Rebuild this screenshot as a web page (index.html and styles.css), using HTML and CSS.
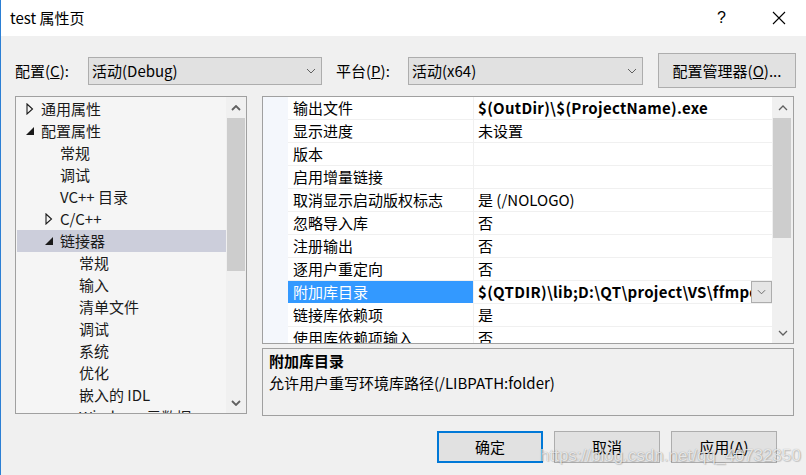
FILE: index.html
```html
<!DOCTYPE html>
<html lang="zh-CN">
<head>
  <meta charset="UTF-8" />
  <title>test 属性页</title>
  <link rel="stylesheet" href="styles.css">
</head>
<body>
<div class="screen">
  <div class="desk"></div>
  <div class="dialog">
    <div class="titlebar">
      <span class="title">test 属性页</span>
      <span class="help">?</span>
      <svg class="close" viewBox="0 0 14 14"><path d="M1 1 L13 13 M13 1 L1 13"/></svg>
    </div>

    <div class="content">
      <!-- config / platform -->
      <div class="config-row">
        <span class="label cfg-label">配置(<u>C</u>):</span>
        <div class="combo cfg-combo">
          <span>活动(Debug)</span>
          <svg class="chev" viewBox="0 0 10 6"><polyline points="1,1 5,5 9,1"/></svg>
        </div>
        <span class="label plat-label">平台(<u>P</u>):</span>
        <div class="combo plat-combo">
          <span>活动(x64)</span>
          <svg class="chev" viewBox="0 0 10 6"><polyline points="1,1 5,5 9,1"/></svg>
        </div>
        <div class="btn manager-btn">配置管理器(<u>O</u>)...</div>
      </div>

      <div class="main">
        <!-- tree -->
        <div class="tree">
          <div class="tree-items">
            <div class="node lv0"><span class="twisty"><svg viewBox="0 0 8 12"><polygon class="closed" points="1,1 6.5,6 1,11"/></svg></span>通用属性</div>
            <div class="node lv0"><span class="twisty"><svg viewBox="0 0 8 12"><polygon class="open" points="8,2 8,10 0,10"/></svg></span>配置属性</div>
            <div class="node lv1"><span class="twisty"></span>常规</div>
            <div class="node lv1"><span class="twisty"></span>调试</div>
            <div class="node lv1"><span class="twisty"></span>VC++ 目录</div>
            <div class="node lv1"><span class="twisty"><svg viewBox="0 0 8 12"><polygon class="closed" points="1,1 6.5,6 1,11"/></svg></span>C/C++</div>
            <div class="node lv1 selected"><span class="twisty"><svg viewBox="0 0 8 12"><polygon class="open" points="8,2 8,10 0,10"/></svg></span>链接器</div>
            <div class="node lv2"><span class="twisty"></span>常规</div>
            <div class="node lv2"><span class="twisty"></span>输入</div>
            <div class="node lv2"><span class="twisty"></span>清单文件</div>
            <div class="node lv2"><span class="twisty"></span>调试</div>
            <div class="node lv2"><span class="twisty"></span>系统</div>
            <div class="node lv2"><span class="twisty"></span>优化</div>
            <div class="node lv2"><span class="twisty"></span>嵌入的 IDL</div>
            <div class="node lv2"><span class="twisty"></span>Windows 元数据</div>
          </div>
          <div class="scrollbar tree-scroll">
            <div class="arrow"><svg viewBox="0 0 10 6"><polyline points="1,5 5,1 9,5"/></svg></div>
            <div class="thumb"></div>
            <div class="track"></div>
            <div class="arrow"><svg viewBox="0 0 10 6"><polyline points="1,1 5,5 9,1"/></svg></div>
          </div>
        </div>

        <div class="right">
          <!-- property grid -->
          <div class="grid">
            <div class="rows">
              <div class="row"><span class="gutter"></span><span class="name">输出文件</span><span class="value bold">$(OutDir)\$(ProjectName).exe</span></div>
              <div class="row"><span class="gutter"></span><span class="name">显示进度</span><span class="value">未设置</span></div>
              <div class="row"><span class="gutter"></span><span class="name">版本</span><span class="value"></span></div>
              <div class="row"><span class="gutter"></span><span class="name">启用增量链接</span><span class="value"></span></div>
              <div class="row"><span class="gutter"></span><span class="name">取消显示启动版权标志</span><span class="value">是 (/NOLOGO)</span></div>
              <div class="row"><span class="gutter"></span><span class="name">忽略导入库</span><span class="value">否</span></div>
              <div class="row"><span class="gutter"></span><span class="name">注册输出</span><span class="value">否</span></div>
              <div class="row"><span class="gutter"></span><span class="name">逐用户重定向</span><span class="value">否</span></div>
              <div class="row active"><span class="gutter"></span><span class="name">附加库目录</span><span class="value bold"><span class="clip">$(QTDIR)\lib;D:\QT\project\VS\ffmpeg\lib</span><span class="drop"><svg viewBox="0 0 10 6"><polyline points="1,1 5,5 9,1"/></svg></span></span></div>
              <div class="row"><span class="gutter"></span><span class="name">链接库依赖项</span><span class="value">是</span></div>
              <div class="row"><span class="gutter"></span><span class="name">使用库依赖项输入</span><span class="value">否</span></div>
            </div>
            <div class="scrollbar grid-scroll">
              <div class="arrow"><svg viewBox="0 0 10 6"><polyline points="1,5 5,1 9,5"/></svg></div>
              <div class="thumb"></div>
              <div class="track"></div>
              <div class="arrow"><svg viewBox="0 0 10 6"><polyline points="1,1 5,5 9,1"/></svg></div>
            </div>
          </div>

          <div class="desc">
            <div class="desc-title">附加库目录</div>
            <div>允许用户重写环境库路径(/LIBPATH:folder)</div>
          </div>
        </div>
      </div>

      <div class="actions">
        <div class="btn primary">确定</div>
        <div class="btn">取消</div>
        <div class="btn">应用(<u>A</u>)</div>
      </div>
    </div>

    <div class="watermark">https://blog.csdn.net/qq_40732350</div>
  </div>
</div>
</body>
</html>
```

FILE: styles.css
```css
body {
  margin: 0;
  padding: 0;
  font-family: "Noto Sans CJK SC", sans-serif;
  font-size: 15px;
  color: #000;
  background: #f0f0f0;
}

.screen {
  display: flex;
  width: 806px;
  height: 475px;
  overflow: hidden;
}

.desk {
  width: 2px;
  background: linear-gradient(#c8d8e8 0%, #d33 4%, #c8d8e8 6%, #eee 20%, #c33 22%, #ddd 24%, #eee 60%, #335 62%, #eee 64%, #c33 90%, #ddd 92%);
}

.dialog {
  position: relative;
  flex: 1;
  border-left: 1px solid #2b7fd4;
  background: #f0f0f0;
  display: flex;
  flex-direction: column;
}

/* title bar */
.titlebar {
  height: 36px;
  background: #fff;
  display: flex;
  align-items: center;
  padding-left: 9px;
}

.title {
  flex: 1;
  font-size: 15px;
  line-height: 20px;
}

.help {
  font-size: 16px;
  margin-right: 46px;
  font-family: "Liberation Sans", sans-serif;
}

.close {
  width: 14px;
  height: 14px;
  margin-right: 20px;
}

.close path {
  stroke: #000;
  stroke-width: 1.1;
  fill: none;
}

.content {
  padding: 17px 10px 0 14px;
}

/* top row */
.config-row {
  display: flex;
  align-items: center;
  height: 35px;
}

.label {
  line-height: 20px;
}

.cfg-label { width: 73px; }
.plat-label { width: 72px; margin-left: 14px; }

.combo {
  height: 26px;
  background: #e1e1e1;
  border: 1px solid #adadad;
  display: flex;
  align-items: center;
  justify-content: space-between;
  padding: 0 5px 0 3px;
  line-height: 20px;
}

.cfg-combo { width: 224px; }
.plat-combo { width: 225px; }

.chev {
  width: 10px;
  height: 6px;
}

.chev polyline,
.drop polyline {
  fill: none;
  stroke: #606060;
  stroke-width: 1;
}

.btn {
  box-sizing: border-box;
  background: #e1e1e1;
  border: 1px solid #adadad;
  display: flex;
  align-items: center;
  justify-content: center;
  line-height: 20px;
}

.manager-btn {
  width: 138px;
  height: 35px;
  margin-left: 15px;
}

/* main area */
.main {
  display: flex;
  margin-top: 8px;
  height: 320px;
}

.tree {
  box-sizing: border-box;
  width: 232px;
  height: 318px;
  border: 1px solid #a0a0a0;
  background: #f5f5f5;
  display: flex;
  overflow: hidden;
  margin-right: 15px;
}

.tree-items {
  flex: 1;
  padding-top: 1px;
  overflow: hidden;
}

.node {
  display: flex;
  align-items: center;
  height: 22px;
  line-height: 22px;
  margin-left: 1px;
  white-space: nowrap;
  color: #1a1a1a;
}

.node.lv0 { padding-left: 8px; }
.node.lv1 { padding-left: 27px; }
.node.lv2 { padding-left: 46px; }

.node.selected {
  background: #cccedb;
}

.twisty {
  width: 16px;
  height: 22px;
  display: flex;
  align-items: center;
}

.twisty svg {
  width: 8px;
  height: 12px;
  margin-left: 1px;
}

.twisty .closed {
  fill: none;
  stroke: #1a1a1a;
  stroke-width: 1.1;
}

.twisty .open {
  fill: #1a1a1a;
}

/* scrollbars */
.scrollbar {
  display: flex;
  flex-direction: column;
  background: #f0f0f0;
}

.tree-scroll { width: 20px; }
.grid-scroll { width: 21px; }

.scrollbar .arrow {
  height: 21px;
  display: flex;
  align-items: center;
  justify-content: center;
}

.scrollbar .arrow svg {
  width: 10px;
  height: 6px;
}

.scrollbar .arrow polyline {
  fill: none;
  stroke: #606060;
  stroke-width: 1.8;
}

.grid-scroll .arrow polyline {
  stroke-width: 1.3;
}

.scrollbar .thumb {
  background: #cdcdcd;
  margin: 0 1px;
}

.tree-scroll .thumb { height: 153px; }
.grid-scroll .thumb { height: 120px; margin-right: 2px; }

.scrollbar .track { flex: 1; }

.right {
  width: 532px;
  display: flex;
  flex-direction: column;
}

/* property grid */
.grid {
  box-sizing: border-box;
  height: 248px;
  border: 1px solid #a0a0a0;
  background: #fff;
  display: flex;
  overflow: hidden;
}

.rows {
  flex: 1;
  overflow: hidden;
}

.row {
  display: flex;
  height: 23px;
  line-height: 22px;
  white-space: nowrap;
}

.gutter {
  width: 25px;
  background: #f4f7fc;
}

.name,
.value {
  box-sizing: border-box;
  border-bottom: 1px solid #f0f0f0;
}

.name {
  width: 185px;
  padding-left: 5px;
}

.value {
  flex: 1;
  padding-left: 4px;
  border-left: 1px solid #f0f0f0;
  display: flex;
  overflow: hidden;
}

.bold {
  font-weight: bold;
  letter-spacing: 0.3px;
}

.row.active .name {
  background: #3399ff;
  color: #fff;
  border-bottom-color: #fff;
}

.clip {
  flex: 1;
  overflow: hidden;
}

.drop {
  box-sizing: border-box;
  width: 21px;
  height: 22px;
  background: #e5e5e5;
  border: 1px solid #adadad;
  display: flex;
  align-items: center;
  justify-content: center;
}

.drop svg {
  width: 9px;
  height: 6px;
}

/* description */
.desc {
  box-sizing: border-box;
  margin-top: 4px;
  height: 68px;
  border: 1px solid #a0a0a0;
  padding: 1px 6px 0;
  line-height: 22px;
}

.desc-title {
  font-weight: bold;
}

/* buttons */
.actions {
  display: flex;
  justify-content: flex-end;
  gap: 11px;
  margin-top: 15px;
  padding-right: 19px;
}

.actions .btn {
  width: 106px;
  height: 32px;
}

.actions .btn.primary {
  border: 2px solid #0078d7;
}

.watermark {
  position: absolute;
  left: 539px;
  top: 446px;
  font-family: "Liberation Sans", sans-serif;
  font-size: 17px;
  color: rgba(255, 255, 255, 0.75);
  text-shadow: 0 0 1px rgba(0, 0, 0, 0.35), 1px 1px 1px rgba(0, 0, 0, 0.15);
  white-space: nowrap;
}
```
